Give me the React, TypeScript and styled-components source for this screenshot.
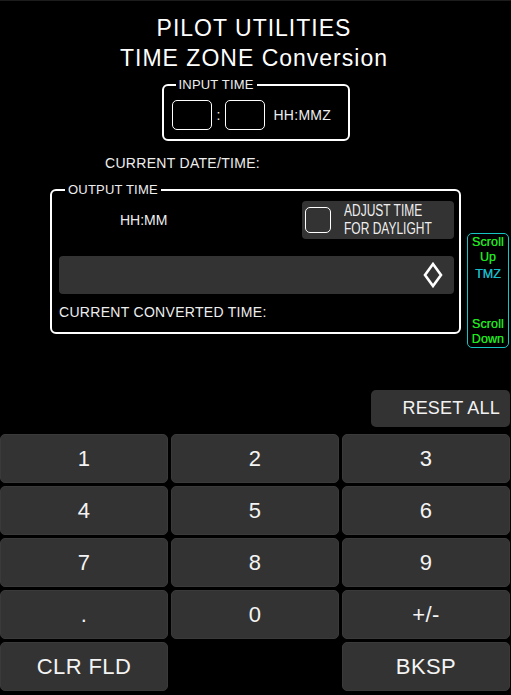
import React from "react";
import styled, { createGlobalStyle } from "styled-components";

const Global = createGlobalStyle`
  html, body { margin: 0; padding: 0; background: #000; }
  body { font-family: "Liberation Sans", Arial, sans-serif; color: #fff; }
  * { box-sizing: border-box; }
`;

const Page = styled.div`
  width: 511px;
  height: 695px;
  border-top: 1px solid #1c1c1c;
  padding-top: 12px;
  display: flex;
  flex-direction: column;
  background: #000;
  overflow: hidden;
  font-family: "Liberation Sans", Arial, sans-serif;
`;

const Title = styled.h1`
  margin: 0;
  padding-right: 3px;
  font-size: 23px;
  font-weight: 400;
  letter-spacing: 1px;
  line-height: 30px;
  text-align: center;
  color: #fff;
`;

const Group = styled.fieldset<{ $width: number; $pad: string }>`
  margin: 0;
  min-width: 0;
  width: ${(p) => p.$width}px;
  padding: ${(p) => p.$pad};
  border: 2px solid #fff;
  border-radius: 6px;
`;

const GroupLabel = styled.legend<{ $indent: number }>`
  font-size: 13px;
  line-height: 14px;
  letter-spacing: 0.2px;
  padding: 0 3px;
  margin-left: ${(p) => p.$indent}px;
  color: #eee;
`;

const InputGroup = styled(Group)`
  align-self: center;
  margin-top: 5px;
`;

const TimeRow = styled.div`
  display: flex;
  align-items: center;
  gap: 5px;
`;

const TimeBox = styled.div`
  width: 40px;
  height: 30px;
  border: 1px solid #fff;
  border-radius: 5px;
`;

const SmallText = styled.span`
  font-size: 14px;
  line-height: 16px;
  color: #eee;
`;

const FormatText = styled(SmallText)`
  margin-left: 3px;
  letter-spacing: 0.3px;
`;

const InfoLine = styled.div<{ $left: number; $top: number }>`
  margin: ${(p) => p.$top}px 0 0 ${(p) => p.$left}px;
  font-size: 14px;
  line-height: 16px;
  letter-spacing: 0.3px;
  color: #eee;
`;

const OutputRow = styled.div`
  display: flex;
  align-items: flex-start;
  gap: 6px;
  margin-top: 12px;
  padding-left: 50px;
`;

const OptionsRow = styled.div`
  display: flex;
  align-items: center;
  height: 38px;
`;

const FormatHint = styled(SmallText)`
  margin-left: 61px;
`;

const AdjustButton = styled.div`
  margin-left: auto;
  width: 152px;
  height: 38px;
  background: #333;
  border-radius: 4px;
  display: flex;
  align-items: center;
  gap: 13px;
  padding-left: 3px;
  overflow: hidden;
`;

const CheckBox = styled.div`
  flex: 0 0 26px;
  width: 26px;
  height: 26px;
  border: 1.5px solid #fff;
  border-radius: 5px;
`;

const NarrowLabel = styled.div`
  font-size: 16px;
  line-height: 18px;
  color: #eee;
  white-space: nowrap;
  transform: scaleX(0.75);
  transform-origin: left center;
`;

const SelectBar = styled.div`
  margin-top: 17px;
  height: 38px;
  background: #333;
  border-radius: 4px;
  display: flex;
  align-items: center;
  justify-content: flex-end;
  padding-right: 10px;
`;

const SidePanel = styled.div`
  width: 42px;
  height: 115px;
  margin-top: 50px;
  border: 1px solid #17c4c4;
  border-radius: 5px;
  display: flex;
  flex-direction: column;
  align-items: center;
  padding-top: 1px;
  font-size: 12.5px;
  line-height: 15px;
  text-align: center;
`;

const ScrollText = styled.div`
  color: #1ee61e;
  letter-spacing: 0.1px;
  text-shadow: 0 0 0.4px #1ee61e;
`;

const ZoneText = styled.div`
  color: #17bccc;
  margin-top: 2px;
  flex: 1;
  text-shadow: 0 0 0.4px #17bccc;
`;

const ResetButton = styled.div`
  align-self: flex-end;
  margin: 42px 1px 0 0;
  width: 139px;
  height: 37px;
  background: #333;
  border-radius: 5px;
  display: flex;
  align-items: center;
  justify-content: flex-end;
  padding-right: 10px;
  font-size: 18px;
  letter-spacing: 0.2px;
  color: #f2f2f2;
`;

const Keypad = styled.div`
  margin-top: 7px;
  display: grid;
  grid-template-columns: repeat(3, 168px);
  grid-auto-rows: 49px;
  gap: 3px;
`;

const Key = styled.div<{ $empty?: boolean }>`
  background: ${(p) => (p.$empty ? "transparent" : "#333")};
  border: ${(p) => (p.$empty ? "none" : "1px solid #3a3a3a")};
  border-radius: 5px;
  display: flex;
  align-items: center;
  justify-content: center;
  font-size: 22px;
  letter-spacing: 0.4px;
  color: #f4f4f4;
`;

const keys = ["1", "2", "3", "4", "5", "6", "7", "8", "9", ".", "0", "+/-", "CLR FLD", "", "BKSP"];

export default function App() {
  return (
    <Page>
      <Global />
      <Title>
        PILOT UTILITIES
        <br />
        TIME ZONE Conversion
      </Title>

      <InputGroup $width={188} $pad="8px 8px 9px 8px">
        <GroupLabel $indent={4}>INPUT TIME</GroupLabel>
        <TimeRow>
          <TimeBox />
          <SmallText>:</SmallText>
          <TimeBox />
          <FormatText>HH:MMZ</FormatText>
        </TimeRow>
      </InputGroup>

      <InfoLine $left={105} $top={14}>CURRENT DATE/TIME:</InfoLine>

      <OutputRow>
        <Group $width={411} $pad="4px 5px 12px 7px">
          <GroupLabel $indent={6}>OUTPUT TIME</GroupLabel>
          <OptionsRow>
            <FormatHint>HH:MM</FormatHint>
            <AdjustButton>
              <CheckBox />
              <NarrowLabel>
                ADJUST TIME
                <br />
                FOR DAYLIGHT
              </NarrowLabel>
            </AdjustButton>
          </OptionsRow>
          <SelectBar>
            <svg width="22" height="26" viewBox="0 0 22 26">
              <polygon points="11,2 19,13 11,24 3,13" fill="none" stroke="#fff" strokeWidth="2.6" strokeLinejoin="miter" />
            </svg>
          </SelectBar>
          <InfoLine $left={0} $top={10}>CURRENT CONVERTED TIME:</InfoLine>
        </Group>
        <SidePanel>
          <ScrollText>
            Scroll
            <br />
            Up
          </ScrollText>
          <ZoneText>TMZ</ZoneText>
          <ScrollText>
            Scroll
            <br />
            Down
          </ScrollText>
        </SidePanel>
      </OutputRow>

      <ResetButton>RESET ALL</ResetButton>

      <Keypad>
        {keys.map((k, i) => (
          <Key key={i} $empty={k === ""}>
            {k}
          </Key>
        ))}
      </Keypad>
    </Page>
  );
}
